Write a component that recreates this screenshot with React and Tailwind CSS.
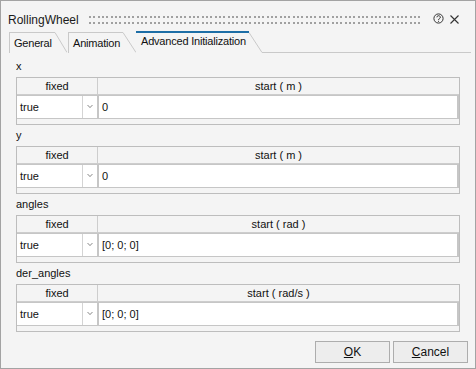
import React from "react";

function Dots() {
  return (
    <svg width="333" height="8" className="block" shapeRendering="crispEdges">
      <defs>
        <pattern id="grip" x="0" y="0" width="13" height="6" patternUnits="userSpaceOnUse">
          <rect x="0" y="0" width="2" height="2" fill="#a0a0a0" />
          <rect x="4" y="0" width="2" height="2" fill="#a0a0a0" />
          <rect x="9" y="0" width="2" height="2" fill="#a0a0a0" />
        </pattern>
      </defs>
      <rect x="0" y="0" width="333" height="8" fill="url(#grip)" />
    </svg>
  );
}

function Slant({ w, h, top = 0.5 }) {
  return (
    <svg width={w} height={h} className="block shrink-0">
      <line x1="0" y1={top} x2={w} y2={h - 0.5} stroke="#c9c9c9" strokeWidth="1" />
    </svg>
  );
}

function Section({ label, unit, value }) {
  return (
    <div className="flex flex-col">
      <div className="h-[16px] leading-[16px] text-[11px] text-[#111]">{label}</div>
      <div className="mt-[3px] w-[444px] h-[48px] border border-[#bdbdbd] flex flex-col">
        <div className="flex h-[17px] border-b border-[#cdcdcd] text-[11px] leading-[16px] text-[#111]">
          <div className="w-[81px] border-r border-[#cdcdcd] text-center">fixed</div>
          <div className="flex-1 text-center">start ( {unit} )</div>
        </div>
        <div className="flex h-[24px] text-[11px] text-[#111]">
          <div className="w-[81px] flex bg-white border-y border-r border-[#c6c6c6]">
            <div className="flex-1 flex items-center pl-[3px] border-r border-[#d4d4d4]">true</div>
            <div className="w-[14px] flex items-center justify-center">
              <svg width="6" height="4" className="block">
                <path d="M0 0 L3 3 L6 0 L5 0 L3 2 L1 0 Z" fill="#8a8a8a" />
              </svg>
            </div>
          </div>
          <div className="flex-1 flex items-center pl-[3px] bg-white border border-r-2 border-[#c6c6c6]">
            {value}
          </div>
        </div>
      </div>
    </div>
  );
}

export default function App() {
  return (
    <div className="w-[476px] h-[369px] bg-[#f4f4f4] border border-[#a3a3a3] flex flex-col font-['Liberation_Sans',Arial,sans-serif] text-[#111] overflow-hidden">
      {/* title bar */}
      <div className="h-[30px] flex items-start">
        <div className="w-[88px] pl-[7px] mt-[11px] text-[12px] leading-[16px] text-[#1a1a1a]">RollingWheel</div>
        <div className="mt-[15px]">
          <Dots />
        </div>
        <div className="ml-[11px] mt-[12px]">
          <svg width="11" height="11" className="block">
            <circle cx="5.5" cy="5.5" r="4.6" fill="none" stroke="#333" strokeWidth="1" />
            <path d="M3.9 4.3 A1.7 1.6 0 1 1 6.4 5.7 C5.8 6 5.5 6.3 5.5 7" fill="none" stroke="#333" strokeWidth="1" />
            <rect x="5" y="7.8" width="1" height="1" fill="#333" />
          </svg>
        </div>
        <div className="ml-[6px] mt-[14px]">
          <svg width="9" height="9" className="block">
            <path d="M0.5 0.5 L8.5 8.5 M8.5 0.5 L0.5 8.5" stroke="#333" strokeWidth="1.1" />
          </svg>
        </div>
      </div>

      {/* tabs */}
      <div className="h-[22px] flex items-end pl-[8px] pr-[4px] text-[11px] tracking-[-0.2px]">
        <div className="flex h-[21px]">
          <div className="w-[46px] border-l border-t border-[#c9c9c9] pl-[4px] pt-[2px] leading-[16px]">General</div>
          <Slant w={12} h={21} />
        </div>
        <div className="flex h-[21px] ml-[1px]">
          <div className="w-[55px] border-l border-t border-[#c9c9c9] pl-[4px] pt-[2px] leading-[16px]">Animation</div>
          <Slant w={13} h={21} />
        </div>
        <div className="flex h-[22px]">
          <div className="w-[113px] border-t-2 border-[#1d6ea6] pl-[5px] leading-[16px] pt-[0px]">Advanced Initialization</div>
          <Slant w={13} h={22} top={1.5} />
        </div>
        <div className="flex-1 h-[22px] border-b border-[#c9c9c9]" />
      </div>

      {/* content */}
      <div className="pl-[15px] pt-[5px] flex flex-col gap-[2px]">
        <Section label="x" unit="m" value="0" />
        <Section label="y" unit="m" value="0" />
        <Section label="angles" unit="rad" value="[0; 0; 0]" />
        <Section label="der_angles" unit="rad/s" value="[0; 0; 0]" />
      </div>

      {/* buttons */}
      <div className="flex justify-end gap-[3px] pr-[7px] mt-[9px] text-[12px]">
        <button className="w-[75px] h-[22px] border border-[#adadad] bg-[#ededed] text-[#111] flex items-center justify-center">
          <span><span className="underline">O</span>K</span>
        </button>
        <button className="w-[75px] h-[22px] border border-[#adadad] bg-[#ededed] text-[#111] flex items-center justify-center">
          <span><span className="underline">C</span>ancel</span>
        </button>
      </div>
    </div>
  );
}
